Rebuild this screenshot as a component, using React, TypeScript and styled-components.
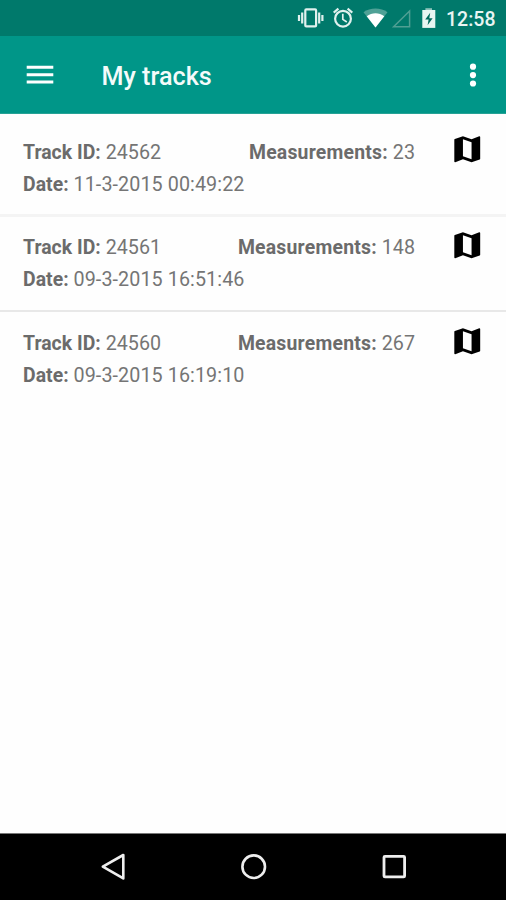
import React from 'react';
import styled, { createGlobalStyle } from 'styled-components';

const GlobalStyle = createGlobalStyle`
  * { box-sizing: border-box; }
  body { margin: 0; background: #fff; font-family: Roboto, "Liberation Sans", sans-serif; }
  svg { display: block; flex: none; }
`;

const Screen = styled.div`
  display: flex;
  flex-direction: column;
  width: 506px;
  height: 900px;
  background: #fefefe;
  overflow: hidden;
`;

const StatusBar = styled.header`
  height: 36px;
  flex: none;
  display: flex;
  justify-content: flex-end;
  background: #00796b;
`;

const Clock = styled.time`
  width: 60px;
  font-size: 19.5px;
  font-weight: 500;
  line-height: 39px;
  color: #e9f5f3;
  white-space: nowrap;
`;

const AppBar = styled.nav`
  height: 78px;
  flex: none;
  display: flex;
  align-items: center;
  padding: 0 13px 0 20px;
  background: #009688;
  border-bottom: 1px solid #26a295;
`;

const IconButton = styled.button`
  width: 40px;
  height: 40px;
  padding: 0;
  border: 0;
  background: none;
  display: flex;
  align-items: center;
  justify-content: center;
`;

const Title = styled.h1`
  flex: 1;
  margin: 4px 0 0 41.5px;
  font-size: 25.2px;
  line-height: 32px;
  font-weight: 500;
  color: #f4fbfa;
`;

const TrackList = styled.main`
  flex: 1;
  padding-top: 7px;
`;

const TrackRow = styled.article<{ $divider?: 'soft' | 'thin' }>`
  display: flex;
  height: 95.6px;
  padding: 15.8px 21.5px 0 23px;
  color: #757575;
  border-bottom: ${({ $divider }) =>
    $divider === 'soft' ? '3px solid #f4f4f4' : $divider === 'thin' ? '2px solid #e8e8e8' : '0'};
`;

const Details = styled.div`
  width: 392px;
`;

const Line = styled.div`
  display: flex;
  justify-content: space-between;
  height: 32px;
  font-size: 19.7px;
  line-height: 32px;
  white-space: nowrap;
`;

const Label = styled.b<{ $spacing?: string }>`
  font-weight: 700;
  font-size: 19.4px;
  letter-spacing: ${({ $spacing }) => $spacing ?? '0.03px'};
  color: #6b6b6b;
`;

const DateValue = styled.span`
  letter-spacing: 0.1px;
`;

const NavBar = styled.footer`
  height: 67px;
  flex: none;
  display: flex;
  justify-content: center;
  align-items: center;
  gap: 100px;
  padding-left: 1px;
  background: #000;
  border-top: 1px solid #777;
`;

const StatusIcons = () => (
  <svg width="149" height="36" viewBox="297 0 149 36" fill="none" stroke="#e0f1ee">
    <rect x="305.3" y="9.4" width="10.8" height="17" rx="1" strokeWidth="2.2" />
    <path d="M302.2 12.5v11M299 15v6M319.2 12.5v11M322.4 15v6" strokeWidth="2.2" />
    <circle cx="343" cy="18.7" r="7.9" strokeWidth="2.2" />
    <path d="M342.8 13.8v5.6l4 2.6" strokeWidth="1.7" />
    <path d="M333.7 12.6l4.7-4M352.3 12.6l-4.7-4" strokeWidth="2.1" />
    <path d="M363.5 12.2C370 7.3 381 7.3 387.5 12.2L375.5 27.5z" fill="#4fa196" stroke="none" />
    <path d="M366.7 16.3C372 12.2 379 12.2 384.3 16.3L375.5 27.5z" fill="#fff" stroke="none" />
    <path d="M393.6 26.8H409.6V11z" stroke="#4f9f93" strokeWidth="1.5" />
    <path d="M422.3 10h13v17.9h-13z" fill="#e8f5f2" stroke="none" />
    <path d="M425.4 8.2h6.6V10h-6.6z" fill="#8dc2ba" stroke="none" />
    <path d="M430.2 12.8l-5 6.8h3.4l-1 5.7 5-7h-3.3z" fill="#00695d" stroke="none" />
  </svg>
);

const MapIcon = () => (
  <svg width="34.5" height="34.5" viewBox="0 0 24 24" fill="#000">
    <path d="M20.5 3l-.16.03L15 5.1 9 3 3.36 4.9c-.21.07-.36.25-.36.48V20.5c0 .28.22.5.5.5l.16-.03L9 18.9l6 2.1 5.64-1.9c.21-.07.36-.25.36-.48V3.5c0-.28-.22-.5-.5-.5zM15 19l-6-2.11V5l6 2.11V19z" />
  </svg>
);

const MapButton = styled(IconButton)`
  width: 34.5px;
  height: 34.5px;
  margin: -4.4px 0 0 35px;
  flex: none;
`;

type Track = { id: number; measurements: number; date: string; divider?: 'soft' | 'thin' };

const tracks: Track[] = [
  { id: 24562, measurements: 23, date: '11-3-2015 00:49:22', divider: 'soft' },
  { id: 24561, measurements: 148, date: '09-3-2015 16:51:46', divider: 'thin' },
  { id: 24560, measurements: 267, date: '09-3-2015 16:19:10' },
];

export default function App() {
  return (
    <>
      <GlobalStyle />
      <Screen>
        <StatusBar>
          <StatusIcons />
          <Clock>12:58</Clock>
        </StatusBar>
        <AppBar>
          <IconButton aria-label="Menu">
            <svg width="28" height="20" viewBox="0 0 28 20" stroke="#fff" strokeWidth="3">
              <path d="M.7 2.3h26.6M.7 9.7h26.6M.7 17.1h26.6" />
            </svg>
          </IconButton>
          <Title>My tracks</Title>
          <IconButton aria-label="More options">
            <svg width="8" height="26" viewBox="0 0 8 26" fill="#fff">
              <circle cx="4" cy="4.7" r="3.1" />
              <circle cx="4" cy="13.1" r="3.1" />
              <circle cx="4" cy="21.5" r="3.1" />
            </svg>
          </IconButton>
        </AppBar>
        <TrackList>
          {tracks.map((t) => (
            <TrackRow key={t.id} $divider={t.divider}>
              <Details>
                <Line>
                  <span><Label>Track ID:</Label> {t.id}</span>
                  <span><Label $spacing="0.22px">Measurements:</Label> {t.measurements}</span>
                </Line>
                <Line>
                  <span><Label>Date:</Label> <DateValue>{t.date}</DateValue></span>
                </Line>
              </Details>
              <MapButton aria-label="Show on map"><MapIcon /></MapButton>
            </TrackRow>
          ))}
        </TrackList>
        <NavBar>
          <IconButton aria-label="Back">
            <svg width="40" height="40" viewBox="93 847 40 40" fill="none" stroke="#eee" strokeWidth="2.6" strokeLinejoin="round">
              <path d="M101.8 866.7L122.3 855v23.4z" />
            </svg>
          </IconButton>
          <IconButton aria-label="Home">
            <svg width="40" height="40" viewBox="233.5 847 40 40" fill="none" stroke="#eee" strokeWidth="2.6">
              <circle cx="253.2" cy="866.7" r="11.3" />
            </svg>
          </IconButton>
          <IconButton aria-label="Recent apps">
            <svg width="40" height="40" viewBox="374 847 40 40" fill="none" stroke="#eee" strokeWidth="2.8">
              <rect x="384" y="856.3" width="20.6" height="20.6" rx="1" />
            </svg>
          </IconButton>
        </NavBar>
      </Screen>
    </>
  );
}
